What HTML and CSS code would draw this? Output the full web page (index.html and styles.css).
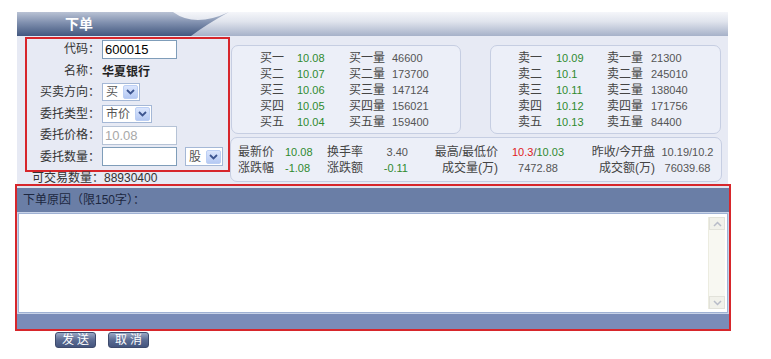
FILE: index.html
```html
<!DOCTYPE html>
<html>
<head>
<meta charset="utf-8">
<link rel="stylesheet" href="styles.css">
</head>
<body>
<div class="page">
  <div class="header">
    <div class="tab">下单</div>
    <svg class="swoosh" width="56" height="24" viewBox="0 0 56 24">
      <defs>
        <linearGradient id="tg" x1="0" y1="0" x2="0" y2="1">
          <stop offset="0" stop-color="#b9c2d4"/>
          <stop offset="0.45" stop-color="#7f8fae"/>
          <stop offset="1" stop-color="#42577f"/>
        </linearGradient>
      </defs>
      <path d="M0,0 Q22,16 56,0 Q34,12 18,24 L0,24 Z" fill="url(#tg)"/>
    </svg>
  </div>
  <div class="main">
    <div class="left">
      <div class="form">
        <div class="row"><span class="lbl">代码：</span><span class="inp">600015</span></div>
        <div class="row"><span class="lbl">名称：</span><span class="name">华夏银行</span></div>
        <div class="row"><span class="lbl">买卖方向：</span><span class="sel w38"><span class="sel-txt">买</span><span class="arrow"><svg width="9" height="6" viewBox="0 0 9 6"><path d="M1,1 L4.5,4.5 L8,1" fill="none" stroke="#3d5590" stroke-width="1.8"/></svg></span></span></div>
        <div class="row"><span class="lbl">委托类型：</span><span class="sel w50"><span class="sel-txt">市价</span><span class="arrow"><svg width="9" height="6" viewBox="0 0 9 6"><path d="M1,1 L4.5,4.5 L8,1" fill="none" stroke="#3d5590" stroke-width="1.8"/></svg></span></span></div>
        <div class="row"><span class="lbl">委托价格：</span><span class="inp dis">10.08</span></div>
        <div class="row"><span class="lbl">委托数量：</span><span class="inp"></span><span class="sel w38 unit"><span class="sel-txt">股</span><span class="arrow"><svg width="9" height="6" viewBox="0 0 9 6"><path d="M1,1 L4.5,4.5 L8,1" fill="none" stroke="#3d5590" stroke-width="1.8"/></svg></span></span></div>
      </div>
      <div class="avail">可交易数量：88930400</div>
    </div>
    <div class="right">
      <div class="quotes">
        <div class="panel book bid">
          <span class="k">买一</span><span class="p">10.08</span><span class="k">买一量</span><span class="v">46600</span>
          <span class="k">买二</span><span class="p">10.07</span><span class="k">买二量</span><span class="v">173700</span>
          <span class="k">买三</span><span class="p">10.06</span><span class="k">买三量</span><span class="v">147124</span>
          <span class="k">买四</span><span class="p">10.05</span><span class="k">买四量</span><span class="v">156021</span>
          <span class="k">买五</span><span class="p">10.04</span><span class="k">买五量</span><span class="v">159400</span>
        </div>
        <div class="panel book ask">
          <span class="k">卖一</span><span class="p">10.09</span><span class="k">卖一量</span><span class="v">21300</span>
          <span class="k">卖二</span><span class="p">10.1</span><span class="k">卖二量</span><span class="v">245010</span>
          <span class="k">卖三</span><span class="p">10.11</span><span class="k">卖三量</span><span class="v">138040</span>
          <span class="k">卖四</span><span class="p">10.12</span><span class="k">卖四量</span><span class="v">171756</span>
          <span class="k">卖五</span><span class="p">10.13</span><span class="k">卖五量</span><span class="v">84400</span>
        </div>
      </div>
      <div class="panel stats">
        <span class="k">最新价</span><span class="g">10.08</span><span class="k">换手率</span><span class="n r">3.40</span><span class="k r">最高/最低价</span><span class="n c"><span class="red">10.3</span>/<span class="g">10.03</span></span><span class="k r">昨收/今开盘</span><span class="n c">10.19/10.2</span>
        <span class="k">涨跌幅</span><span class="g">-1.08</span><span class="k">涨跌额</span><span class="g r">-0.11</span><span class="k r">成交量(万)</span><span class="n c">7472.88</span><span class="k r">成交额(万)</span><span class="n c">76039.68</span>
      </div>
    </div>
  </div>
  <div class="reason">
    <div class="reason-head">下单原因（限150字）：</div>
    <div class="reason-body">
      <div class="ta">
        <div class="ta-text"></div>
        <div class="sb">
          <span class="sb-btn"><svg width="9" height="6" viewBox="0 0 9 6"><path d="M1,5 L4.5,1.5 L8,5" fill="none" stroke="#b8bcc8" stroke-width="1.5"/></svg></span>
          <span class="sb-btn"><svg width="9" height="6" viewBox="0 0 9 6"><path d="M1,1 L4.5,4.5 L8,1" fill="none" stroke="#b8bcc8" stroke-width="1.5"/></svg></span>
        </div>
      </div>
    </div>
    <div class="reason-foot"></div>
  </div>
  <div class="buttons">
    <span class="btn">发送</span>
    <span class="btn">取消</span>
  </div>
</div>
</body>
</html>
```
FILE: styles.css
```css
* { box-sizing: border-box; }
body {
  margin: 0;
  background: #fff;
  font-family: "Liberation Sans", "Noto Sans CJK SC", sans-serif;
  font-size: 12px;
  color: #333;
}
.page {
  padding: 12px 0 0 17px;
  width: 728px;
}
.header {
  display: flex;
  height: 24px;
  background: linear-gradient(#f5f6fa, #e0e4ed 40%, #a6b1c9);
}
.tab {
  width: 156px;
  height: 24px;
  background: linear-gradient(#b9c2d4, #7f8fae 45%, #42577f);
  color: #fff;
  font-weight: bold;
  font-size: 14px;
  line-height: 24px;
  padding-left: 48px;
}
.swoosh { display: block; }
.main {
  display: flex;
  height: 148px;
  background: #e7eaf4;
}
.left {
  width: 214px;
  padding: 1px 0 0 8px;
}
.form {
  width: 205px;
  height: 135px;
  border: 2px solid #d7262b;
  display: flex;
  flex-direction: column;
  gap: 1.5px;
}
.row {
  height: 20px;
  display: flex;
  align-items: center;
}
.lbl {
  width: 73px;
  text-align: right;
  margin-right: 2px;
  line-height: 14px;
}
.name { font-weight: bold; color: #222; }
.inp {
  width: 75px;
  height: 19px;
  border: 1px solid #7f9db9;
  background: #fff;
  font-size: 13px;
  line-height: 17px;
  padding-left: 2px;
  color: #000;
}
.inp.dis { color: #a8a8a8; border-color: #b6c3d6; }
.sel {
  height: 18px;
  border: 1px solid #a5b8d6;
  background: #fff;
  display: flex;
  align-items: center;
  justify-content: space-between;
  padding: 0 1px 0 3px;
}
.w38 { width: 38px; }
.w50 { width: 50px; }
.unit { margin-left: 8px; height: 19px; }
.sel-txt { color: #555; line-height: 14px; }
.arrow {
  width: 15px;
  height: 14px;
  border: 1px solid #bccff4;
  border-radius: 2px;
  background: linear-gradient(#dbe6fd, #b5c9f3);
  display: flex;
  align-items: center;
  justify-content: center;
}
.arrow svg { display: block; }
.avail {
  height: 12px;
  line-height: 12px;
  padding-left: 7px;
  color: #333;
}
.right {
  padding: 9px 0 0 0;
  width: 497px;
}
.quotes {
  display: flex;
  gap: 29px;
}
.panel {
  border: 1px solid #c6cee2;
  border-radius: 7px;
  background: #eceff8;
}
.book {
  height: 89px;
  display: grid;
  grid-auto-rows: 16px;
  line-height: 16px;
  padding-top: 4px;
}
.bid {
  width: 230px;
  padding-left: 28px;
  grid-template-columns: 37px 52px 43px 1fr;
}
.ask {
  width: 231px;
  padding-left: 27px;
  grid-template-columns: 38px 51px 44px 1fr;
}
.book .k { color: #444; }
.book .p, .g { color: #2f8a2f; font-size: 11px; }
.book .v { color: #555; font-size: 11px; }
.stats {
  margin-top: 3px;
  margin-left: -1px;
  width: 492px;
  height: 45px;
  display: grid;
  grid-template-columns: 47px 42px 38px 43px 90px 80px 77px 65px;
  grid-auto-rows: 16px;
  line-height: 16px;
  padding: 6px 0 0 7px;
}
.stats .k { color: #444; }
.n { color: #555; font-size: 11px; }
.red { color: #e0201c; }
.r { text-align: right; }
.c { text-align: center; }
.reason {
  margin-left: -2px;
  width: 716px;
  border: 2px solid #d7262b;
  padding-top: 2px;
  background: #dfe4ef;
}
.reason-head {
  height: 24px;
  line-height: 24px;
  background: #6a7ea6;
  color: #1c2740;
  padding-left: 6px;
}
.reason-body {
  border-top: 1px solid #c8d3e8;
  border-bottom: 1px solid #c8d3e8;
  background: #c8d3e8;
  padding: 0 1px 0 1px;
}
.ta {
  height: 100px;
  border: 1px solid #9fb1d3;
  background: #fff;
  display: flex;
}
.ta-text { flex: 1; }
.sb {
  width: 17px;
  margin: 3px 2px 3px 0;
  background: #f8f8f2;
  border-left: 1px solid #ececE0;
  display: flex;
  flex-direction: column;
  justify-content: space-between;
}
.sb-btn {
  height: 13px;
  background: #f1f1ea;
  border: 1px solid #e2e2da;
  display: flex;
  align-items: center;
  justify-content: center;
}
.reason-foot {
  height: 15px;
  background: #7a8cb8;
}
.buttons {
  display: flex;
  gap: 12px;
  padding: 1px 0 0 38px;
}
.btn {
  width: 41px;
  height: 16px;
  border: 1px solid #3e4b6c;
  border-radius: 3px;
  background: linear-gradient(#9aa7c4, #5b6c93 50%, #44557e);
  color: #fff;
  line-height: 14px;
  text-align: center;
  letter-spacing: 3px;
  padding-left: 3px;
}
```
